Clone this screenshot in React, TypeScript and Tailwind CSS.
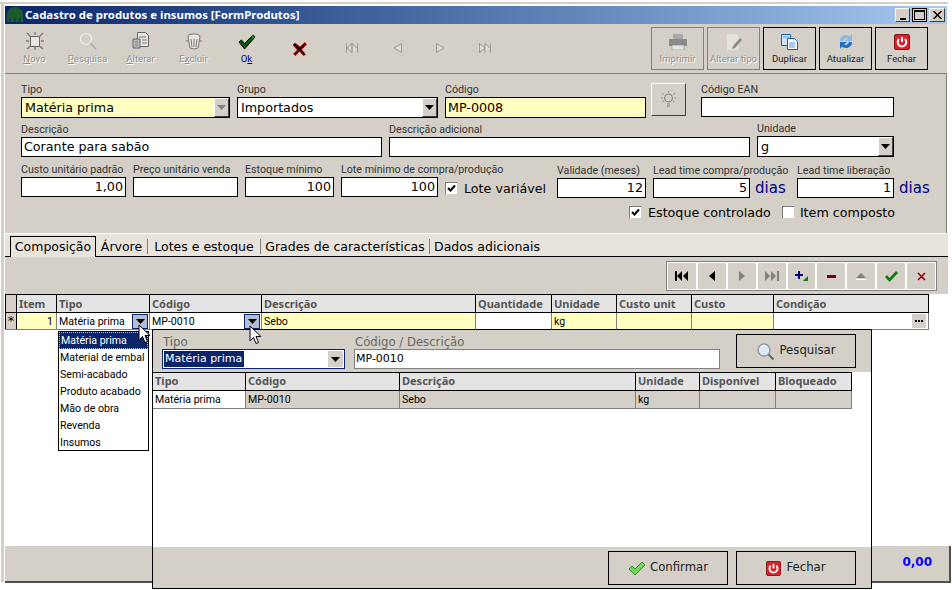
import React from 'react';

const label = "font-['Roboto',sans-serif] text-[10.7px] leading-[11px] h-[13px] text-[#333] whitespace-nowrap";
const value = "font-['DejaVu_Sans',sans-serif] text-[12.7px] text-black whitespace-nowrap";
const tabText = "font-['DejaVu_Sans',sans-serif] text-[12.5px] text-black whitespace-nowrap";
const cellText = "font-['Roboto',sans-serif] text-[10.6px] text-black whitespace-nowrap";
const headText = "font-['Noto_Sans',sans-serif] text-[11px] font-bold text-[#555] whitespace-nowrap";
const popupText = "font-['DejaVu_Sans',sans-serif] text-[11.7px] whitespace-nowrap";
const popupInputText = "font-['DejaVu_Sans',sans-serif] text-[11px] whitespace-nowrap";

const Arrow: React.FC<{ color?: string }> = ({ color = '#000' }) => (
    <svg width="9" height="5" viewBox="0 0 9 5">
        <path d="M0 0h9L4.5 5z" fill={color} />
    </svg>
);

const ComboBtn: React.FC<{ disabled?: boolean }> = ({ disabled }) => (
    <div className="w-[15px] self-stretch flex items-center justify-center bg-[#d4d0c8] border-t border-l border-t-white border-l-white border-r border-b border-r-[#404040] border-b-[#404040]">
        <Arrow color={disabled ? '#808080' : '#000'} />
    </div>
);

const Field: React.FC<{
    title: string;
    text?: string;
    w: number;
    right?: boolean;
    yellow?: boolean;
    combo?: boolean;
    disabledCombo?: boolean;
    lower?: boolean;
    tall?: boolean;
}> = ({ title, text, w, right, yellow, combo, disabledCombo, lower, tall }) => (
    <div className={`flex flex-col shrink-0 ${lower ? 'mt-px' : ''}`} style={{ width: w }}>
        <div className={label}>{title}</div>
        <div className={`${tall ? 'h-[21px]' : 'h-[20px]'} border border-black flex items-center ${yellow ? 'bg-[#ffffc0]' : 'bg-white'} ${right ? 'justify-end pr-[2px]' : 'pl-[2px]'}`}>
            <span className={`${value} ${combo ? 'flex-1 pl-[1px]' : ''}`}>{text}</span>
            {combo && <ComboBtn disabled={disabledCombo} />}
        </div>
    </div>
);

const Check: React.FC<{ on?: boolean }> = ({ on }) => (
    <div className="w-[13px] h-[13px] shrink-0 bg-white border border-t-[#808080] border-l-[#808080] border-r-[#d4d0c8] border-b-[#d4d0c8] flex items-center justify-center">
        {on && (
            <svg width="9" height="9" viewBox="0 0 9 9">
                <path d="M1 4l2.5 2.5L8 1.5" fill="none" stroke="#000" strokeWidth="2" />
            </svg>
        )}
    </div>
);

const NovoIcon = () => (
    <svg width="18" height="18" viewBox="0 0 18 18" fill="none">
        <rect x="4.5" y="4.5" width="9" height="10" stroke="#666" fill="#e8e6e0" />
        <path d="M1 1l3.500 3.500M9 0v3M17 1l-3.500 3.500M0 9h3M15 9h3M1 17l3.500-3M17 17l-3.500-3M9 15v3" stroke="#777" strokeWidth="1.300" />
    </svg>
);
const SearchOffIcon = () => (
    <svg width="18" height="18" viewBox="0 0 18 18" fill="none">
        <circle cx="7" cy="7" r="5.5" stroke="#f2f0ec" strokeWidth="1.2" />
        <path d="M11 11l6 6" stroke="#a8a8a8" strokeWidth="1.2" />
    </svg>
);
const AlterIcon = () => (
    <svg width="18" height="18" viewBox="0 0 18 18" fill="none">
        <path d="M5.5 .5h8l3 3v11h-11z" fill="#e8e6e0" stroke="#666" />
        <path d="M1 7h7v9H1z" fill="#bbb" stroke="#666" />
        <path d="M7 5h7M10 8h5M10 11h5M3 10h3M3 13h3" stroke="#777" />
    </svg>
);
const TrashIcon = () => (
    <svg width="18" height="18" viewBox="0 0 18 18" fill="none">
        <ellipse cx="9" cy="4" rx="6" ry="2" fill="#e8e6e0" stroke="#777" />
        <path d="M3 5l2 11q4 2 8 0l2-11" fill="#e8e6e0" stroke="#777" />
        <path d="M6 7l1 8M9 7v8M12 7l-1 8M1 9h2M15 9h2" stroke="#777" />
    </svg>
);
const OkIcon = () => (
    <svg width="18" height="16" viewBox="0 0 18 16">
        <path d="M1 8l2.5-2 3 3.5L15 1l2 2L6.5 15z" fill="#0a5a12" stroke="#000" strokeWidth="1" />
        <path d="M14 2.5l1.5 1" stroke="#3ee04a" strokeWidth="1.5" />
    </svg>
);
const CancelIcon = () => (
    <svg width="14" height="14" viewBox="0 0 14 14">
        <path d="M2 1l5 4 5-4.500 1.500 2-5 5 4 5-2 1-4-4.500-4 4.500-2-1.500 4-4-4.500-5z" fill="#200" stroke="#c00" strokeWidth=".8" />
    </svg>
);

const NavOff: React.FC<{ d: string }> = ({ d }) => (
    <svg width="12" height="10" viewBox="0 0 12 10" fill="none">
        <path d={d} stroke="#999" fill="#e0ddd6" />
    </svg>
);

const ToolBtn: React.FC<{ icon: React.ReactNode; text?: React.ReactNode; on?: boolean }> = ({ icon, text, on }) => (
    <div className="w-[53px] flex flex-col items-center">
        <div className="h-[18px] mt-[8px] flex items-end justify-center">{icon}</div>
        <div className={`mt-[2px] font-['Roboto',sans-serif] text-[9.6px] leading-[13px] ${on ? 'text-[#000080]' : "text-[#909090] [text-shadow:1px_1px_0_#fff]"}`}>{text}</div>
    </div>
);

const RightBtn: React.FC<{ icon: React.ReactNode; text: string; off?: boolean }> = ({ icon, text, off }) => (
    <div className={`w-[53px] h-[43px] border flex flex-col items-center ${off ? 'border-[#808080]' : 'border-black'}`}>
        <div className="h-[17px] mt-[5px] flex items-center">{icon}</div>
        <div className={`mt-[2px] font-['Roboto',sans-serif] text-[9.6px] leading-[13px] whitespace-nowrap ${off ? "text-[#909090] [text-shadow:1px_1px_0_#fff]" : 'text-[#222]'}`}>{text}</div>
    </div>
);

const PowerIcon: React.FC<{ size?: number }> = ({ size = 16 }) => (
    <svg width={size} height={size} viewBox="0 0 16 16" fill="none">
        <rect x=".5" y=".5" width="15" height="15" rx="1.500" fill="#d8232a" stroke="#8a1014" />
        <path d="M5 5a4.300 4.300 0 1 0 6 0" stroke="#fff" strokeWidth="2" />
        <path d="M8 3v5" stroke="#fff" strokeWidth="2" />
    </svg>
);

const MagnifierIcon = () => (
    <svg width="19" height="19" viewBox="0 0 19 19" fill="none">
        <circle cx="8" cy="8" r="6" fill="#dbe8f5" stroke="#8a9aaa" strokeWidth="1.4" />
        <path d="M5 5.500a4 4 0 0 1 4-2" stroke="#fff" strokeWidth="1.500" />
        <path d="M12.500 12.500l5 5" stroke="#666" strokeWidth="2" />
    </svg>
);

const GreenCheck = () => (
    <svg width="18" height="15" viewBox="0 0 18 15">
        <path d="M1 8l3-3 3 3 7-7 3 3L7 14z" fill="#6fd65c" stroke="#3b8a3a" />
    </svg>
);

const columns = [
    { t: '', w: 12 },
    { t: 'Item', w: 40 },
    { t: 'Tipo', w: 93 },
    { t: 'Código', w: 112 },
    { t: 'Descrição', w: 214 },
    { t: 'Quantidade', w: 76 },
    { t: 'Unidade', w: 65 },
    { t: 'Custo unit', w: 75 },
    { t: 'Custo', w: 82 },
    { t: 'Condição', w: 155 },
];

const popupColumns = [
    { t: 'Tipo', w: 93, v: 'Matéria prima', bg: 'bg-white' },
    { t: 'Código', w: 154, v: 'MP-0010', bg: 'bg-[#d4d0c8]' },
    { t: 'Descrição', w: 236, v: 'Sebo', bg: 'bg-[#d4d0c8]' },
    { t: 'Unidade', w: 64, v: 'kg', bg: 'bg-[#d4d0c8]' },
    { t: 'Disponível', w: 76, v: '', bg: 'bg-[#d4d0c8]' },
    { t: 'Bloqueado', w: 76, v: '', bg: 'bg-[#d4d0c8]' },
];

const tabs = [
    { t: 'Árvore', w: 52 },
    { t: 'Lotes e estoque', w: 113 },
    { t: 'Grades de características', w: 169 },
];

const DropBtn = () => (
    <div className="w-[16px] h-[15px] bg-[#b4bcd4] border border-[#0a246a] flex items-center justify-center">
        <Arrow />
    </div>
);

const navIcons: React.ReactNode[] = [
    <svg key="0" width="14" height="10" viewBox="0 0 14 10"><path d="M0 0h2v10H0zM7 0v10L2 5zM13 0v10L8 5z" fill="#000" /></svg>,
    <svg key="1" width="6" height="10" viewBox="0 0 6 10"><path d="M6 0v10L0 5z" fill="#000" /></svg>,
    <svg key="2" width="6" height="10" viewBox="0 0 6 10"><path d="M0 0v10l6-5z" fill="#808080" /></svg>,
    <svg key="3" width="14" height="10" viewBox="0 0 14 10"><path d="M0 0v10l5-5zM6 0v10l5-5zM12 0h2v10h-2z" fill="#808080" /></svg>,
    <svg key="4" width="14" height="12" viewBox="0 0 14 12"><path d="M0 4h3V1h2v3h3v2H5v3H3V6H0z" fill="#000080" /><path d="M8 11l5-5v5z" fill="#0a7a12" /></svg>,
    <svg key="5" width="9" height="3" viewBox="0 0 9 3"><path d="M0 0h9v3H0z" fill="#800000" /></svg>,
    <svg key="6" width="10" height="7" viewBox="0 0 10 7"><path d="M5 0l5 5H0z" fill="#808080" /><path d="M0 6h10v1H0z" fill="#fff" /></svg>,
    <svg key="7" width="13" height="11" viewBox="0 0 13 11"><path d="M0 6l2-2 2.500 3L11 0l2 2-8.500 9z" fill="#0a7a12" /></svg>,
    <svg key="8" width="9" height="9" viewBox="0 0 9 9"><path d="M1 1l7 7M8 1L1 8" stroke="#800000" strokeWidth="1.600" fill="none" /></svg>,
];

const Cursor: React.FC<{ className: string }> = ({ className }) => (
    <svg className={className} width="13" height="20" viewBox="0 0 13 20">
        <path d="M1 1v15l3.500-3.500 2.500 6 2.500-1-2.500-6H12z" fill="#fff" stroke="#000" />
    </svg>
);

const App: React.FC = () => {
    const dropdownItems = ['Material de embal', 'Semi-acabado', 'Produto acabado', 'Mão de obra', 'Revenda', 'Insumos'];

    return (
        <div className="relative w-[952px] h-[590px] bg-white overflow-hidden">
            {/* Window */}
            <div className="absolute left-0 top-[2px] w-[5px] h-[580px] border-l-[3px] border-t-2 border-[#d4d0c8] ml-px" />
            <div className="absolute left-0 top-[2px] w-[948px] h-[2px] bg-[#d4d0c8]" />
            <div className="pt-[6px] pl-[5px]">
                {/* Title bar */}
                <div className="w-[942px] h-[18px] flex items-center bg-gradient-to-r from-[#0a246a] to-[#a6caf0]">
                    <svg className="ml-[2px]" width="16" height="16" viewBox="0 0 16 16">
                        <path d="M0 15V8a8 8 0 0 1 16 0v7z" fill="#1c5a2e" />
                        <path d="M3 15v-4M8 15v-5M13 15v-4" stroke="#0a246a" />
                    </svg>
                    <span className="ml-[2px] font-['Noto_Sans',sans-serif] text-[11.4px] font-bold text-white whitespace-nowrap">
                        Cadastro de produtos e insumos [FormProdutos]
                    </span>
                    <div className="ml-auto mr-[2px] flex items-center gap-[2px]">
                        <div className="w-[15px] h-[14px] bg-[#d4d0c8] border border-t-white border-l-white border-r-[#404040] border-b-[#404040] flex items-end justify-center pb-px">
                            <div className="w-[6px] h-[2px] bg-black" />
                        </div>
                        <div className="w-[15px] h-[14px] bg-[#d4d0c8] border border-black flex items-center justify-center">
                            <div className="w-[11px] h-[10px] border border-black border-t-2" />
                        </div>
                        <div className="w-[16px] h-[14px] bg-[#d4d0c8] border border-t-white border-l-white border-r-[#404040] border-b-[#404040] flex items-center justify-center">
                            <svg width="9" height="8" viewBox="0 0 9 8"><path d="M.5 0l8 8M8.500 0l-8 8" stroke="#000" strokeWidth="1.500" /></svg>
                        </div>
                    </div>
                </div>

                {/* Toolbar */}
                <div className="w-[942px] h-[50px] bg-[#d4d0c8] border-b border-[#808080] flex items-start pl-[3px]">
                    <ToolBtn icon={<NovoIcon />} text={<><u>N</u>ovo</>} />
                    <ToolBtn icon={<SearchOffIcon />} text={<><u>P</u>esquisa</>} />
                    <ToolBtn icon={<AlterIcon />} text={<><u>A</u>lterar</>} />
                    <ToolBtn icon={<TrashIcon />} text={<>E<u>x</u>cluir</>} />
                    <ToolBtn icon={<OkIcon />} text={<>O<u>k</u></>} on />
                    <div className="w-[54px] flex justify-center pt-[18px]"><CancelIcon /></div>
                    <div className="w-[50px] flex justify-center pt-[19px]"><NavOff d="M.5 .5v9M1 5l5-4.500v9zM11.500 .5v9M11 5L6 .5v9" /></div>
                    <div className="w-[42px] flex justify-center pt-[19px]"><NavOff d="M9.500 .5v9L2 5z" /></div>
                    <div className="w-[42px] flex justify-center pt-[19px]"><NavOff d="M2.500 .5v9L10 5z" /></div>
                    <div className="w-[48px] flex justify-center pt-[19px]"><NavOff d="M.5 .5v9M.5 .5l5.500 4.500-5.500 4.500M11.500 .5v9M11 5L6 .5v9" /></div>
                    <div className="ml-auto mr-[19px] mt-[3px] flex gap-[3px]">
                        <RightBtn off text="Imprimir" icon={
                            <svg width="18" height="16" viewBox="0 0 18 16">
                                <path d="M4 0h10v5H4z" fill="#a8a8a8" /><path d="M0 5h18v7H0z" fill="#8a8a8a" /><path d="M3 11h12v5H3z" fill="#e4e4e4" stroke="#888" strokeWidth=".6" />
                            </svg>
                        } />
                        <RightBtn off text="Alterar tipo" icon={
                            <svg width="18" height="16" viewBox="0 0 18 16">
                                <path d="M2 0h9l3 3v13H2z" fill="#e4e2dc" /><path d="M8 12l7-8 2 2-7 8-3 1z" fill="#8a8a8a" />
                            </svg>
                        } />
                        <RightBtn text="Duplicar" icon={
                            <svg width="17" height="16" viewBox="0 0 17 16">
                                <path d="M.5 .5h9v11h-9z" fill="#cfe4f7" stroke="#1a5ea8" /><path d="M6.500 4.500h7l3 3v8h-10z" fill="#fff" stroke="#1a5ea8" /><path d="M2 3h6M8 9h6M8 11h6M8 13h6" stroke="#5a94d0" />
                            </svg>
                        } />
                        <RightBtn text="Atualizar" icon={
                            <svg width="16" height="17" viewBox="0 0 16 17">
                                <path d="M2 8a6 6 0 0 1 10-4.500L14 1v7H7l3-2.500A3.500 3.500 0 0 0 5 8z" fill="#8ab8e4" />
                                <path d="M14 9a6 6 0 0 1-10 4.500L2 16V9h7l-3 2.500A3.500 3.500 0 0 0 11 9z" fill="#1f70c4" />
                            </svg>
                        } />
                        <RightBtn text="Fechar" icon={<PowerIcon />} />
                    </div>
                </div>

                {/* Product form */}
                <div className="w-[942px] h-[159px] bg-[#d4d0c8] border-r border-[#808080] pl-[16px] pt-[10px] flex flex-col">
                    <div className="flex items-start h-[34px]">
                        <Field title="Tipo" text="Matéria prima" w={209} yellow combo disabledCombo tall />
                        <div className="w-[7px]" />
                        <Field title="Grupo" text="Importados" w={201} combo tall />
                        <div className="w-[7px]" />
                        <Field title="Código" text="MP-0008" w={201} yellow tall />
                        <div className="ml-[5px] -mt-px w-[35px] h-[33px] bg-[#d4d0c8] border border-t-white border-l-white border-r-[#404040] border-b-[#404040] flex items-center justify-center">
                            <svg width="15" height="17" viewBox="0 0 15 17" fill="none">
                                <circle cx="7.500" cy="7" r="4" stroke="#808080" />
                                <path d="M6 13h3M6 15h3M7.500 0v1.500M1 2l1.500 1.500M14 2l-1.500 1.500M0 7h1.500M13.500 7H15M1.500 11L3 10M13.500 11L12 10" stroke="#808080" />
                            </svg>
                        </div>
                        <div className="w-[15px]" />
                        <Field title="Código EAN" w={193} />
                    </div>
                    <div className="flex items-start mt-[6px] h-[34px]">
                        <Field title="Descrição" text="Corante para sabão" w={361} />
                        <div className="w-[7px]" />
                        <Field title="Descrição adicional" w={361} />
                        <div className="w-[7px]" />
                        <div className="-mt-px"><Field title="Unidade" text="g" w={137} combo tall /></div>
                    </div>
                    <div className="flex items-start mt-[6px] h-[34px]">
                        <Field title="Custo unitário padrão" text="1,00" w={105} right />
                        <div className="w-[7px]" />
                        <Field title="Preço unitário venda" w={105} />
                        <div className="w-[7px]" />
                        <Field title="Estoque mínimo" text="100" w={89} right />
                        <div className="w-[7px]" />
                        <Field title="Lote mínimo de compra/produção" text="100" w={97} right />
                        <div className="ml-[7px] mt-[15px] flex items-center gap-[6px] w-[112px]">
                            <Check on />
                            <span className={value}>Lote variável</span>
                        </div>
                        <Field title="Validade (meses)" text="12" w={89} right lower />
                        <div className="w-[7px]" />
                        <Field title="Lead time compra/produção" text="5" w={97} right lower />
                        <span className="ml-[5px] mt-[13px] w-[42px] font-['DejaVu_Sans',sans-serif] text-[15px] text-[#000080]">dias</span>
                        <Field title="Lead time liberação" text="1" w={97} right lower />
                        <span className="ml-[5px] mt-[13px] font-['DejaVu_Sans',sans-serif] text-[15px] text-[#000080]">dias</span>
                    </div>
                    <div className="flex items-center mt-[5px] ml-[608px]">
                        <Check on />
                        <span className={`${value} ml-[6px]`}>Estoque controlado</span>
                        <div className="w-[11px]" />
                        <Check />
                        <span className={`${value} ml-[5px]`}>Item composto</span>
                    </div>
                </div>

                {/* Tabs */}
                <div className="w-[943px] h-[24px] bg-[#e8e4dc] border-t border-white border-b border-b-black flex items-end pl-[5px]">
                    <div className={`${tabText} w-[86px] h-[21px] -mb-px pt-px bg-[#e8e4dc] border border-black border-b-0 flex items-center justify-center`}>Composição</div>
                    {tabs.map(t => (
                        <div key={t.t} className={`${tabText} h-[15px] mb-[2px] pt-px border-r border-[#808080] flex items-center justify-center`} style={{ width: t.w }}>{t.t}</div>
                    ))}
                    <div className={`${tabText} h-[15px] mb-[2px] pt-px pl-[4px] flex items-center`}>Dados adicionais</div>
                </div>

                {/* Grid toolbar */}
                <div className="w-[943px] h-[37px] bg-[#d4d0c8] pt-[4px] flex justify-end pr-[11px]">
                    <div className="w-[271px] h-[30px] border border-[#808080] bg-white p-px flex gap-[2px]">
                        {navIcons.map((icon, i) => (
                            <div key={i} className="flex-1 bg-[#d4d0c8] flex items-center justify-center">{icon}</div>
                        ))}
                    </div>
                </div>

                {/* Grid area */}
                <div className="w-[946px] h-[252px] bg-white flex flex-col">
                    <div className="flex w-[924px] h-[19px] bg-[#e4e4e4] border-t border-b border-black">
                        {columns.map((c, i) => (
                            <div key={i} className={`${headText} h-full px-[2px] pt-px flex items-center border-r border-black shrink-0 ${i === 0 ? 'bg-[#d4d0c8] border-l' : ''}`} style={{ width: c.w }}>{c.t}</div>
                        ))}
                    </div>
                    <div className="flex w-[924px] h-[17px] border-b border-[#808080]">
                        <div className="w-[12px] bg-[#d4d0c8] border-r border-black border-l flex items-center justify-center font-['DejaVu_Sans',sans-serif] text-[13px] text-black">*</div>
                        <div className={`${cellText} w-[40px] bg-[#ffffc0] border-r border-[#808080] flex items-center justify-end pr-[3px] pt-[2px]`}>1</div>
                        <div className={`${cellText} w-[93px] bg-white border-r border-[#808080] pl-[2px] flex items-center justify-between`}>
                            <span className="pt-[2px]">Matéria prima</span>
                            <div className="mr-[1px]"><DropBtn /></div>
                        </div>
                        <div className={`${cellText} w-[112px] bg-white border-r border-[#808080] pl-[2px] flex items-center justify-between`}>
                            <span className="pt-[2px]">MP-0010</span>
                            <div className="mr-[1px]"><DropBtn /></div>
                        </div>
                        <div className={`${cellText} w-[214px] bg-[#ffffc0] border-r border-[#808080] pl-[2px] pt-[2px] flex items-center`}>Sebo</div>
                        <div className="w-[76px] bg-white border-r border-[#808080]" />
                        <div className={`${cellText} w-[65px] bg-[#ffffc0] border-r border-[#808080] pl-[2px] pt-[2px] flex items-center`}>kg</div>
                        <div className="w-[75px] bg-[#ffffc0] border-r border-[#808080]" />
                        <div className="w-[82px] bg-[#ffffc0] border-r border-[#808080]" />
                        <div className="w-[155px] bg-white border-r border-[#808080] flex justify-end items-center pr-[2px]">
                            <div className="w-[14px] h-[14px] bg-[#d4d0c8] flex items-center justify-center gap-px">
                                <div className="w-[2px] h-[2px] bg-black" /><div className="w-[2px] h-[2px] bg-black" /><div className="w-[2px] h-[2px] bg-black" />
                            </div>
                        </div>
                    </div>
                </div>

                {/* Footer */}
                <div className="w-[946px] h-[37px] bg-[#d4d0c8] border-b-2 border-r-2 border-b-[#505050] border-r-[#505050] flex justify-end items-center pr-[17px] pb-[4px]">
                    <span className="font-['DejaVu_Sans',sans-serif] text-[12px] font-bold text-[#0000ff]">0,00</span>
                </div>
            </div>

            {/* Type dropdown */}
            <div className="absolute left-[58px] top-[331px] w-[91px] h-[120px] bg-white border border-black">
                <div className="font-['Roboto',sans-serif] text-[10.6px] whitespace-nowrap h-[17px] px-[1px] bg-[#0a246a] text-white border border-dotted border-[#c0c0c0] flex items-center">Matéria prima</div>
                {dropdownItems.map(t => (
                    <div key={t} className={`${cellText} h-[17px] px-[1px] flex items-center overflow-hidden`}>{t}</div>
                ))}
            </div>

            {/* Product search popup */}
            <div className="absolute left-[152px] top-[329px] w-[720px] h-[260px] bg-white border border-black flex flex-col">
                <div className="h-[42px] bg-[#d4d0c8] flex items-start">
                    <div className="ml-[9px] mt-[5px] w-[183px]">
                        <div className={`${popupText} leading-[14px] pl-px text-[#666]`}>Tipo</div>
                        <div className="h-[20px] bg-white border border-[#0a246a] flex items-center pl-[1px]">
                            <span className={`${popupInputText} bg-[#0a246a] text-white px-px w-[80px]`}>Matéria prima</span>
                            <div className="ml-auto mr-[1px] w-[15px] h-[16px] bg-[#d4d0c8] flex items-center justify-center"><Arrow /></div>
                        </div>
                    </div>
                    <div className="ml-[9px] mt-[5px] w-[366px]">
                        <div className={`${popupText} leading-[14px] pl-px text-[#666]`}>Código / Descrição</div>
                        <div className={`${popupInputText} h-[20px] bg-white border border-[#808080] flex items-center pl-[1px] text-black`}>MP-0010</div>
                    </div>
                    <div className="ml-[16px] mt-[4px] w-[120px] h-[34px] border border-black flex items-center justify-center gap-[4px]">
                        <MagnifierIcon />
                        <span className={`${popupText} text-[#222]`}>Pesquisar</span>
                    </div>
                </div>
                <div className="flex w-[699px] h-[19px] bg-[#e4e4e4] border-b border-black border-t">
                    {popupColumns.map(c => (
                        <div key={c.t} className={`${headText} h-full px-[2px] flex items-center border-r border-black shrink-0`} style={{ width: c.w }}>{c.t}</div>
                    ))}
                </div>
                <div className="flex w-[699px] h-[18px] border-b border-[#808080]">
                    {popupColumns.map(c => (
                        <div key={c.t} className={`${cellText} ${c.bg} h-full px-[2px] flex items-center border-r border-[#808080] shrink-0`} style={{ width: c.w }}>{c.v}</div>
                    ))}
                </div>
                <div className="flex-1" />
                <div className="h-[41px] bg-[#d4d0c8] flex items-start justify-end gap-[8px] pr-[15px] pt-[4px]">
                    <div className="w-[120px] h-[34px] border border-black flex items-center justify-center gap-[4px]">
                        <GreenCheck />
                        <span className={`${popupText} text-[#222]`}>Confirmar</span>
                    </div>
                    <div className="w-[120px] h-[34px] border border-black flex items-center justify-center gap-[5px]">
                        <PowerIcon size={15} />
                        <span className={`${popupText} text-[#222]`}>Fechar</span>
                    </div>
                </div>
            </div>

            {/* Mouse pointers */}
            <Cursor className="absolute left-[138px] top-[324px]" />
            <Cursor className="absolute left-[249px] top-[325px]" />
        </div>
    );
};

export default App;
